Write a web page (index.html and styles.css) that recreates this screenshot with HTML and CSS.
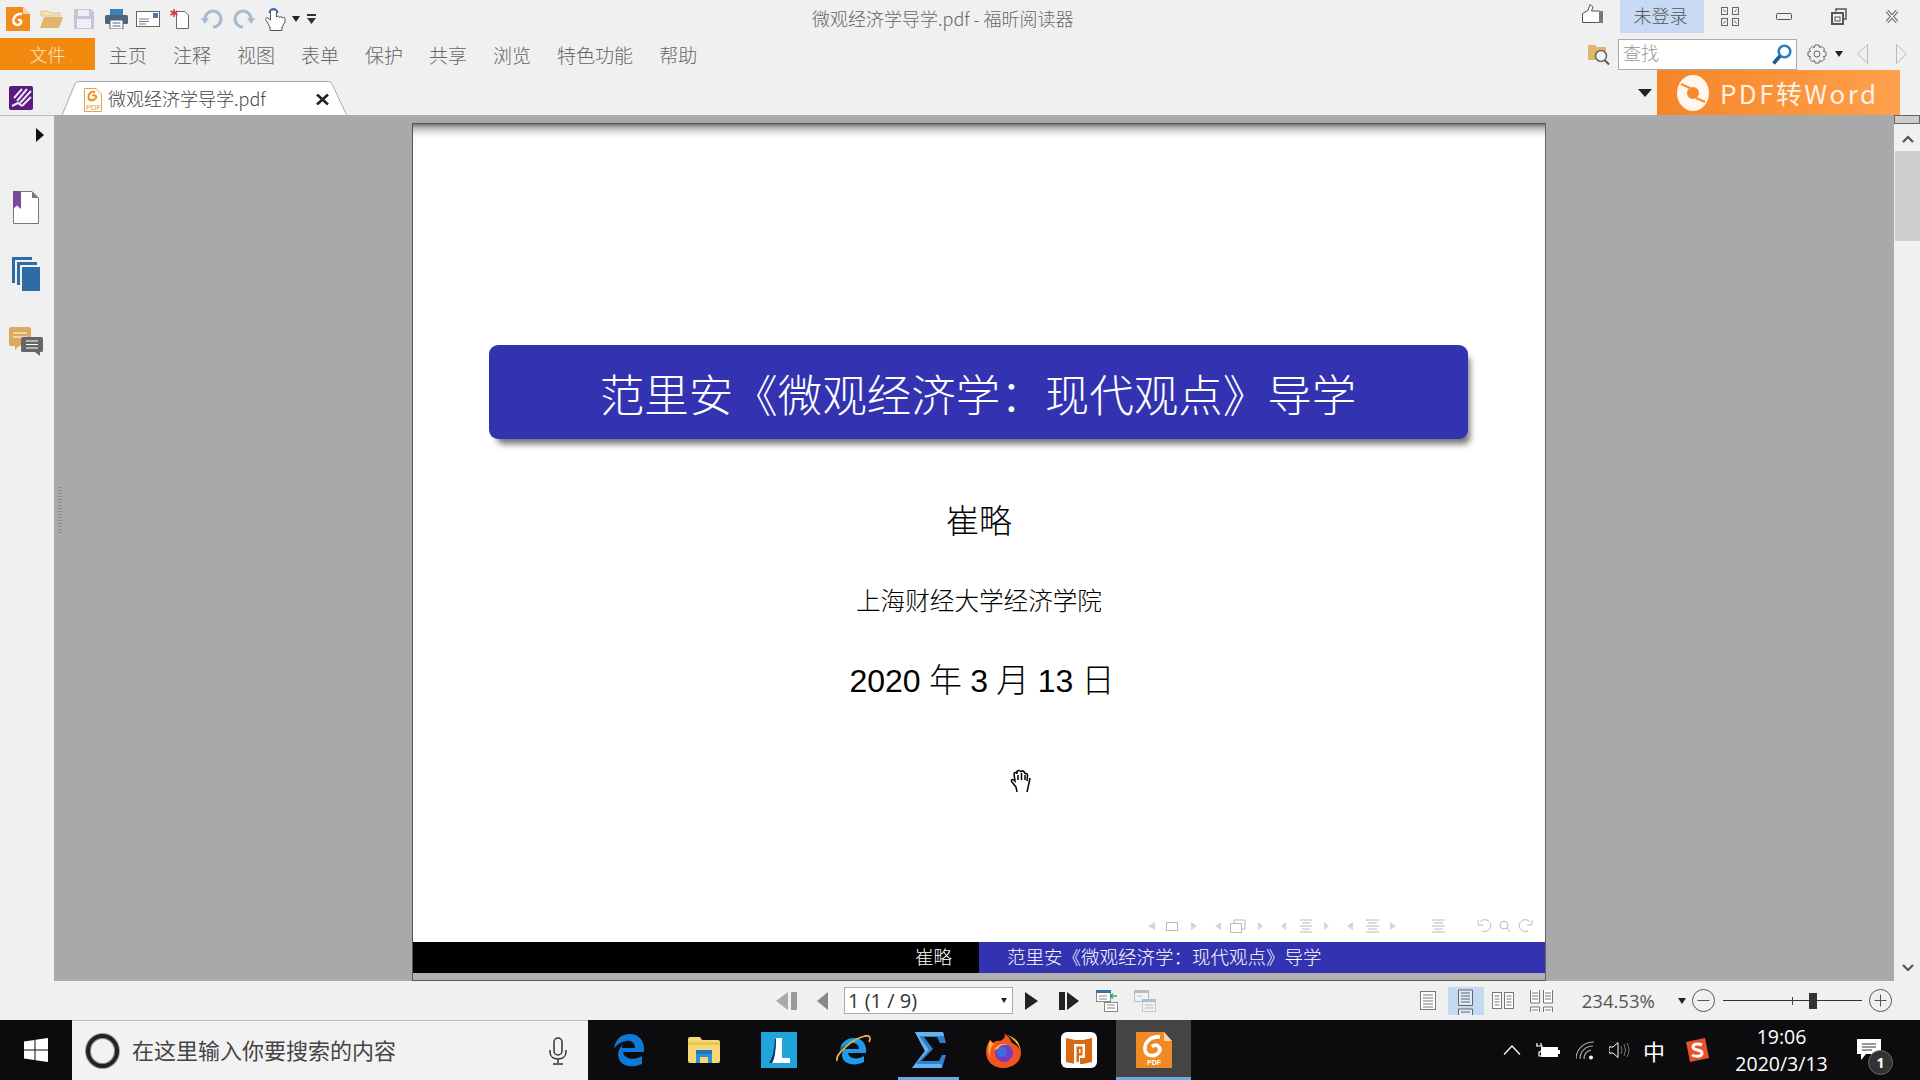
FILE: index.html
```html
<!DOCTYPE html>
<html lang="zh">
<head>
<meta charset="utf-8">
<title>微观经济学导学.pdf - 福昕阅读器</title>
<link rel="stylesheet" href="styles.css">
</head>
<body>
<div class="app">
  <header class="titlebar">
    <div class="qat">
      <svg width="24" height="24" viewBox="0 0 24 24"><path d="M0 0H17L24 7V24H0Z" fill="#f28a1c"/><path d="M17 0L24 7H17Z" fill="#fbd3a4"/><path d="M16 7C11 6 7 10 7.500 14.500C8 18.500 13 19 15 16C16 14 14 12 12 13.500" fill="none" stroke="#fff" stroke-width="2.400"/></svg>
      <svg width="23" height="18" viewBox="0 0 23 18"><path d="M1 1H8L10 3H20V6H1Z" fill="#f6e2b8" stroke="#e0c48c"/><path d="M4 7H23L19 18H0Z" fill="#e2b56c"/></svg>
      <svg width="20" height="20" viewBox="0 0 20 20"><path d="M0 0H17L20 3V20H0Z" fill="#c9c3d8"/><rect x="4" y="1" width="11" height="6" fill="#f1eff6"/><rect x="3" y="10" width="14" height="9" fill="#f1eff6"/></svg>
      <svg width="23" height="20" viewBox="0 0 23 20"><rect x="5" y="0" width="13" height="7" fill="#3f7fb4"/><rect x="0" y="6" width="23" height="9" rx="1.500" fill="#4f6478"/><rect x="5" y="11" width="13" height="9" fill="#fff" stroke="#4f6478"/><path d="M7.500 14H15.500M7.500 17H15.500" stroke="#4f6478"/></svg>
      <svg width="24" height="16" viewBox="0 0 24 16"><rect x=".5" y=".5" width="23" height="15" fill="#fff" stroke="#666"/><rect x="17" y="2" width="5" height="5" fill="#4f78a8"/><path d="M3 8H13M3 10.500H13M3 13H10" stroke="#777"/></svg>
      <svg width="19" height="20" viewBox="0 0 19 20"><path d="M6.500 2.500H15L18.500 6V19.500H6.500Z" fill="#fff" stroke="#666"/><path d="M4 0V8M.5 2L7.500 6M.5 6L7.500 2" stroke="#c8403a" stroke-width="1.500"/></svg>
      <svg width="23" height="20" viewBox="0 0 23 20"><path d="M12 18A8 8 0 1 0 4 10" fill="none" stroke="#a9bccd" stroke-width="3.200"/><path d="M0 9H8L4 15Z" fill="#a9bccd"/></svg>
      <svg width="23" height="20" viewBox="0 0 23 20"><path d="M11 18A8 8 0 1 1 19 10" fill="none" stroke="#a9bccd" stroke-width="3.200"/><path d="M15 9H23L19 15Z" fill="#a9bccd"/></svg>
      <svg width="21" height="24" viewBox="0 0 21 24"><path d="M5.500 4V13L3 11C1 10 0 12 1.500 14L5 20V23.500H17V20L20 15V11.500C20 10 18 10 17.500 11C17.500 9.500 15 9.500 14.500 10.500C14.500 9 12 9 11.500 10V4C11 2.500 6 2.500 5.500 4Z" fill="#fff" stroke="#555"/><path d="M4.500 6A4 4 0 1 1 12.500 6" fill="none" stroke="#3f6fb8" stroke-width="1.800"/></svg>
      <span class="tri tri-sm"></span>
      <svg width="9" height="11" viewBox="0 0 9 11"><path d="M0 0H9V2H0ZM0 4H9L4.500 10Z" fill="#333"/></svg>
    </div>
    <div class="doc-title">微观经济学导学.pdf - 福昕阅读器</div>
    <div class="winctl">
      <svg class="thumb" width="21" height="19" viewBox="0 0 21 19"><path d="M.5 9.500L6 6.500L8 .5L11 3L9.500 7H17.500V18.500H.5Z" fill="#fff" stroke="#555"/><rect x="17" y="7" width="4" height="12" fill="#777"/></svg>
      <span class="login"><span class="lift">未登录</span></span>
      <svg width="18" height="19" viewBox="0 0 18 19"><g fill="none" stroke="#666"><rect x=".5" y=".5" width="6" height="7"/><rect x="11.500" y=".5" width="6" height="7"/><rect x=".5" y="11.500" width="6" height="7"/><rect x="11.500" y="11.500" width="6" height="7"/><path d="M2.500 2.500L4.500 5M15.500 2.500L13.500 5M2.500 16.500L4.500 14M15.500 16.500L13.500 14"/></g></svg>
      <svg width="16" height="7" viewBox="0 0 16 7"><rect x=".5" y=".5" width="15" height="6" rx="1" fill="none" stroke="#555"/></svg>
      <svg width="16" height="17" viewBox="0 0 16 17"><path d="M5 3.500V1H15V11H12" fill="none" stroke="#555" stroke-width="1.500"/><rect x="1" y="5" width="11" height="11" fill="none" stroke="#555" stroke-width="2"/><rect x="4" y="9" width="5" height="4" fill="none" stroke="#555"/></svg>
      <svg width="16" height="13" viewBox="0 0 16 13"><path d="M3 1L13 12M13 1L3 12" stroke="#666" stroke-width="3.400"/><path d="M3 1L13 12M13 1L3 12" stroke="#f0f0f0" stroke-width="1.400"/></svg>
    </div>
  </header>

  <nav class="menubar">
    <div class="file-tab">文件</div>
    <ul class="menu">
      <li>主页</li><li>注释</li><li>视图</li><li>表单</li><li>保护</li><li>共享</li><li>浏览</li><li>特色功能</li><li>帮助</li>
    </ul>
    <div class="findbar">
      <svg width="22" height="22" viewBox="0 0 22 22"><path d="M0 2H7L9 4H18V17H0Z" fill="#e2b56c"/><circle cx="13" cy="13" r="5.500" fill="#f4f4f4" stroke="#666" stroke-width="1.500"/><path d="M17 17.500L21 21.500" stroke="#555" stroke-width="2"/></svg>
      <label class="search"><span class="lift">查找</span>
        <svg width="20" height="21" viewBox="0 0 20 21"><circle cx="12.500" cy="7.500" r="5.800" fill="#fff" stroke="#2c7fc0" stroke-width="2.600"/><path d="M8 12L1.500 19.500" stroke="#1d5f94" stroke-width="3.600"/></svg>
      </label>
      <svg width="20" height="20" viewBox="0 0 20 20"><path d="M8 1H12L12.500 3.500L15 2.500L17.500 5L16.500 7.500L19 8V12L16.500 12.500L17.500 15L15 17.500L12.500 16.500L12 19H8L7.500 16.500L5 17.500L2.500 15L3.500 12.500L1 12V8L3.500 7.500L2.500 5L5 2.500L7.500 3.500Z" fill="none" stroke="#666"/><circle cx="10" cy="10" r="3" fill="none" stroke="#666"/></svg>
      <span class="tri tri-sm"></span>
      <svg width="11" height="20" viewBox="0 0 11 20"><path d="M10.500 .5L.5 10L10.500 19.500Z" fill="none" stroke="#bbb"/></svg>
      <svg width="11" height="20" viewBox="0 0 11 20"><path d="M.5 .5L10.500 10L.5 19.500Z" fill="none" stroke="#bbb"/></svg>
    </div>
  </nav>

  <div class="tabbar">
    <svg class="app-mark" width="24" height="24" viewBox="0 0 24 24"><rect width="24" height="24" rx="2" fill="#5b1a80"/><path d="M5 12L13 3M8 15L18 3M11 17L22 5M13 20L22 11M3 20L9 17L13 20" fill="none" stroke="#efe6f4" stroke-width="2"/></svg>
    <div class="tab">
      <svg class="tab-shape" width="289" height="39" viewBox="0 0 289 39"><path d="M0 39L15 3Q16 .5 19 .5H268Q271 .5 272 3L289 39" fill="#fff" stroke="#aaa"/></svg>
      <svg class="tab-pdf" width="18" height="24" viewBox="0 0 18 24"><path d="M.5 .5H12L17.500 6V23.500H.5Z" fill="#fff" stroke="#e8a04a"/><path d="M11 4C6 3 4 7 4.500 10C5 13 10 13 12 10C13 8 10 6 8.500 8" fill="none" stroke="#ef8f1f" stroke-width="2"/><text x="2" y="21.500" class="pdf-mini">PDF</text></svg>
      <span class="tab-name">微观经济学导学.pdf</span>
      <svg class="tab-close" width="13" height="11" viewBox="0 0 13 11"><path d="M1 .5L12 10.500M12 .5L1 10.500" stroke="#222" stroke-width="2.600"/></svg>
    </div>
    <span class="tri tri-md"></span>
    <div class="promo">
      <svg width="32" height="36" viewBox="0 0 32 36"><ellipse cx="16" cy="18" rx="16" ry="18" fill="#fff7ee"/><circle cx="16" cy="18" r="6" fill="#f58a2b"/><path d="M4 9L13 13M28 27L19 23" stroke="#f58a2b" stroke-width="2"/></svg>
      <span>PDF转Word</span>
    </div>
  </div>

  <main class="workspace">
    <aside class="sidebar">
      <span class="side-toggle"></span>
      <svg class="side-book" width="26" height="33" viewBox="0 0 26 33"><path d="M.5 .5H19L25.500 7V32.500H.5Z" fill="#fff" stroke="#777"/><path d="M19 .5L25.500 7H19Z" fill="#777"/><path d="M0 0H8V18L4 14.500L0 18Z" fill="#7a4a9a"/></svg>
      <svg class="side-pages" width="28" height="34" viewBox="0 0 28 34"><path d="M0 0H20V3H3V26H0Z" fill="#2e6ca8"/><path d="M5 5H25V8H8V28H5Z" fill="#2e6ca8"/><rect x="10" y="10" width="18" height="24" fill="#2e6ca8"/></svg>
      <svg class="side-notes" width="34" height="29" viewBox="0 0 34 29"><path d="M2 0H20Q22 0 22 2V17Q22 19 20 19H10L6 23V19H2Q0 19 0 17V2Q0 0 2 0Z" fill="#dcaa5e"/><path d="M4 6H18M4 10H18" stroke="#fff"/><path d="M14 10H32Q34 10 34 12V24Q34 25 32 25H31V29L26 25H14Q12 25 12 24V12Q12 10 14 10Z" fill="#666"/><path d="M17 14H29M17 17.500H29M17 21H29" stroke="#fff"/></svg>
    </aside>
    <div class="canvas">
      <span class="grip"></span>
      <article class="page">
        <h1 class="beamer-title">范里安《微观经济学：现代观点》导学</h1>
        <p class="author">崔略</p>
        <p class="school">上海财经大学经济学院</p>
        <p class="date"><span class="num">2020</span> 年 <span class="num">3</span> 月 <span class="num">13</span> 日</p>
        <svg class="beamer-nav" width="390" height="20" viewBox="1145 916 390 20">
          <g fill="#d4d4dc"><path d="M1155 922V930L1148 926ZM1191 922V930L1197 926ZM1221 922V930L1215 926ZM1258 922V930L1263 926ZM1286 922V930L1281 926ZM1324 922V930L1329 926ZM1353 922V930L1347 926ZM1390 922V930L1396 926Z"/></g>
          <g fill="none" stroke="#b8b8c4"><rect x="1166.500" y="922.500" width="11" height="8"/><rect x="1230.500" y="923.500" width="11" height="9"/><path d="M1234 923V920H1245V929H1242"/><path d="M1300 920H1312M1302 923H1310M1300 926H1312M1302 929H1310M1300 932H1312M1366 920H1379M1368 923H1377M1366 926H1379M1368 929H1377M1366 932H1379M1432 920H1445M1434 923H1443M1432 926H1445M1434 929H1443M1432 932H1445"/><path d="M1480 922A6 6 0 1 1 1482 931M1478 920V925H1483"/><circle cx="1504" cy="925" r="4"/><path d="M1507 928L1510 932"/><path d="M1530 922A6 6 0 1 0 1528 931M1532 920V925H1527"/></g>
        </svg>
        <footer class="beamer-foot"><span class="foot-author">崔略</span><span class="foot-title">范里安《微观经济学：现代观点》导学</span></footer>
        <svg class="cursor" width="24" height="24" viewBox="0 0 24 24"><path d="M3 13L7 18L8 23M18 23L20 14L21 9M3 13C1 10 4 10 6 12L5 5C5 3 8 3 8 5M8 5L8 2.500C9 1 11 1 12 3M12 3C13 1 15.500 2 15.500 4M15.500 5C17 3.500 19 5 18.500 7L18 12" fill="#fff" stroke="#000" stroke-width="1.500"/><path d="M9 6V11M12.500 4V11M16 6V11" stroke="#000" stroke-width="1.500"/></svg>
      </article>
    </div>
    <div class="scrollbar">
      <span class="split-box"></span>
      <svg class="scroll-up" width="12" height="8" viewBox="0 0 12 8"><path d="M1 7L6 2L11 7" fill="none" stroke="#555" stroke-width="2.200"/></svg>
      <span class="scroll-thumb"></span>
      <svg class="scroll-down" width="12" height="8" viewBox="0 0 12 8"><path d="M1 1L6 6L11 1" fill="none" stroke="#555" stroke-width="2.200"/></svg>
    </div>
  </main>

  <div class="statusbar">
    <div class="pager">
      <svg width="21" height="18" viewBox="0 0 21 18"><path d="M12 0V18L0 9Z" fill="#aaa"/><path d="M15 0H21V18H15Z" fill="#999"/></svg>
      <svg width="15" height="18" viewBox="0 0 15 18"><path d="M13 0V18L2 9Z" fill="#888"/></svg>
      <div class="page-input"><span>1 (1 / 9)</span><i class="tri tri-xs"></i></div>
      <svg width="13" height="18" viewBox="0 0 13 18"><path d="M0 0V18L13 9Z" fill="#222"/></svg>
      <svg width="20" height="18" viewBox="0 0 20 18"><path d="M0 0H6V18H0ZM8 0V18L20 9Z" fill="#222"/></svg>
      <svg width="22" height="22" viewBox="0 0 22 22"><rect x=".5" y=".5" width="14" height="11" fill="#fff" stroke="#888"/><rect width="15" height="3" fill="#3d6ea8"/><path d="M3 6H11M3 9H11" stroke="#888"/><rect x="8.500" y="12.500" width="13" height="9" fill="#fff" stroke="#888"/><path d="M11 15H19M11 18H19" stroke="#888"/><path d="M21 6H15M17 3.500L14.500 6L17 8.500" fill="none" stroke="#3aa56b" stroke-width="1.300"/></svg>
      <svg width="22" height="22" viewBox="0 0 22 22"><rect x=".5" y=".5" width="14" height="11" fill="#f2f2f2" stroke="#bbb"/><rect width="15" height="3" fill="#bbb"/><rect x="8.500" y="9.500" width="13" height="12" fill="#f2f2f2" stroke="#bcc8d8"/><rect x="8" y="9" width="14" height="3" fill="#a9bfd8"/><path d="M3 6H8M11 15H19M11 18H19" stroke="#bbb"/></svg>
    </div>
    <div class="viewtools">
      <span class="view"><svg width="16" height="19" viewBox="0 0 16 19"><rect x=".5" y=".5" width="15" height="18" fill="#fff" stroke="#777"/><path d="M3 4H13M3 7H13M3 10H13M3 13H13M3 16H13" stroke="#777"/></svg></span>
      <span class="view view-on"><svg width="15" height="28" viewBox="0 0 15 28"><path d="M.5 18.500V3H14.500V18.500ZM.5 28V22H14.500V28" fill="#dfeaf8" stroke="#666"/><path d="M3 6H12M3 9H12M3 12H12M3 15H12M3 25H12" stroke="#666"/></svg></span>
      <span class="view"><svg width="22" height="17" viewBox="0 0 22 17"><g fill="#fff" stroke="#777"><rect x=".5" y=".5" width="9" height="16"/><rect x="12.500" y=".5" width="9" height="16"/></g><path d="M2.500 4H7.500M2.500 7H7.500M2.500 10H7.500M2.500 13H7.500M14.500 4H19.500M14.500 7H19.500M14.500 10H19.500M14.500 13H19.500" stroke="#777"/></svg></span>
      <span class="view"><svg width="23" height="22" viewBox="0 0 23 22"><path d="M.5 0V13H9.500V0M13.500 0V13H22.500V0M.5 22V17H9.500V22M13.500 22V17H22.500V22" fill="#fff" stroke="#777"/><path d="M2 3H8M2 6H8M2 9H8M15 3H21M15 6H21M15 9H21M2 20H8M15 20H21" stroke="#777"/></svg></span>
      <span class="zoom-value">234.53%</span>
      <i class="tri tri-sm"></i>
      <svg width="23" height="23" viewBox="0 0 23 23"><circle cx="11.500" cy="11.500" r="11" fill="none" stroke="#555"/><path d="M5.500 11.500H17.500" stroke="#555"/></svg>
      <div class="slider"><span class="tick"></span><span class="knob"></span></div>
      <svg width="23" height="23" viewBox="0 0 23 23"><circle cx="11.500" cy="11.500" r="11" fill="none" stroke="#555"/><path d="M5.500 11.500H17.500M11.500 5.500V17.500" stroke="#555"/></svg>
    </div>
  </div>

  <footer class="taskbar">
    <div class="start"><svg width="24" height="24" viewBox="0 0 24 24"><path d="M0 3.500L10.500 2V11.500H0ZM11.500 1.800L24 0V11.500H11.500ZM0 12.500H10.500V22L0 20.500ZM11.500 12.500H24V24L11.500 22.200Z" fill="#fff"/></svg></div>
    <div class="taskbar-search">
      <span class="cortana"></span>
      <span class="search-hint">在这里输入你要搜索的内容</span>
      <svg class="mic" width="18" height="28" viewBox="0 0 18 28"><rect x="5" y="1" width="8" height="17" rx="4" fill="none" stroke="#333" stroke-width="1.500"/><path d="M1 13V15C1 20 5 22 9 22C13 22 17 20 17 15V13M9 22V26M4 27H14" fill="none" stroke="#333" stroke-width="1.500"/></svg>
    </div>
    <div class="apps">
      <span class="app-slot"><svg width="32" height="33" viewBox="0 0 32 33"><path d="M1 15C2 5 9 0 17 0C26 0 32 7 31 18H10C11 25 21 27 29 22V30C18 35 6 32 5 21C5 17 7 13 10 10C9 12 9 13 9 14H22C22 8 17 6 13 7C8 8 3 11 1 15Z" fill="#0c7ad6"/></svg></span>
      <span class="app-slot"><svg width="32" height="26" viewBox="0 0 32 26"><path d="M0 2Q0 0 2 0H12L14 3H30Q32 3 32 5V24Q32 26 30 26H2Q0 26 0 24Z" fill="#f8d775"/><path d="M0 5H32V8H0Z" fill="#eec458"/><path d="M8 16H24V26H20V20H12V26H8Z" fill="#2f8fd8"/><rect x="8" y="13" width="16" height="4" fill="#1e76bd"/></svg></span>
      <span class="app-slot"><svg width="36" height="36" viewBox="0 0 36 36"><rect width="36" height="36" fill="#1fa5d8"/><path d="M15 6H21V26H29V31H11Q14 25 15 6Z" fill="#fff"/><path d="M14 7Q13 25 8 31H11Q15 25 15 7Z" fill="#10305e"/></svg></span>
      <span class="app-slot"><svg width="35" height="31" viewBox="0 0 35 31"><path d="M4 15C5 7 11 3 18 3C26 3 31 9 30 18H12C13 24 22 25 28 21V27C18 32 6 29 6 20C6 17 7 15 9 13C9 14 10 14 11 14H23C23 9 19 8 16 8C11 9 7 11 4 15Z" fill="#1f9be8"/><path d="M1 26C-1 20 14 5 29 1C34 0 35 3 33 7" fill="none" stroke="#e3b04a" stroke-width="1.800"/></svg></span>
      <span class="app-slot app-open"><svg width="34" height="36" viewBox="0 0 34 36"><path d="M3 0H31L34 11H28L25 5H12L21 17L9 29H27L30 23H34L30 36H0L13 19Z" fill="#2d7fd0"/><path d="M3 0H31L32 4H7L17 18L4 32H29L30 36H0L13 19Z" fill="#66b4ec"/></svg></span>
      <span class="app-slot"><svg width="35" height="35" viewBox="0 0 35 35"><path d="M18 0C24 5 24 6 26 10C31 12 35 16 35 21C34 30 26 35 17 35C7 35 0 28 0 19C0 14 2 10 4 7C5 8 6 10 6 11C8 8 12 7 14 8C19 6 20 3 18 0Z" fill="#f2531f"/><path d="M18 0C25 4 33 10 35 20C35 16 33 9 29 6C27 4 21 2 18 0Z" fill="#f9b731"/><path d="M4 7C2 13 1 19 5 25C3 18 5 14 8 11Z" fill="#fbb03b"/><circle cx="18" cy="20" r="9" fill="#6d3fc4"/><circle cx="16" cy="19" r="5" fill="#3d6be0"/><path d="M8 17C11 11 18 10 23 12C17 11 13 13 12 16Z" fill="#ffb43a"/></svg></span>
      <span class="app-slot"><svg width="36" height="36" viewBox="0 0 36 36"><rect width="36" height="36" rx="6" fill="#fff"/><path d="M5 6L14 8H22L31 6V30L22 32H14L5 30Z" fill="#d96a15"/><path d="M13 12H24V26H19V33H13Z" fill="#fff"/><path d="M15.500 14.500H21.500V23.500H18V30H15.500Z" fill="#d96a15"/><rect x="18" y="17" width="1.500" height="4" fill="#fff"/></svg></span>
      <span class="app-slot app-active"><svg width="36" height="36" viewBox="0 0 36 36"><path d="M0 0H28L36 9V36H0Z" fill="#f08a24"/><path d="M28 0L36 9H28Z" fill="#fbd3a4"/><path d="M24 5C14 4 8 11 9 18C10 24 19 26 23 20C26 15 20 11 16 15" fill="none" stroke="#fff" stroke-width="3.600"/><text x="11" y="33" class="pdf-task">PDF</text></svg></span>
    </div>
    <div class="tray">
      <svg width="18" height="10" viewBox="0 0 18 10"><path d="M1 9.500L9 1L17 9.500" fill="none" stroke="#fff" stroke-width="1.200"/></svg>
      <svg width="24" height="15" viewBox="0 0 24 15"><path d="M1 0V3M5 0V3M0 3H6V6C6 8 4 9 3 9V13H7" fill="none" stroke="#fff" stroke-width="1.200"/><rect x="5" y="4" width="17" height="10" fill="#fff"/><rect x="22" y="7" width="2" height="4" fill="#fff"/></svg>
      <svg width="19" height="19" viewBox="0 0 19 19"><path d="M0 18C0 9 7 1 18 1M4 18C4 11 9 5 17 5M8 18C8 13 11 10 15 9" fill="none" stroke="#aaa" stroke-width="1.200"/><circle cx="15" cy="16.500" r="2" fill="#fff"/></svg>
      <svg width="22" height="16" viewBox="0 0 22 16"><path d="M0 5H4L9 .5V15.500L4 11H0Z" fill="none" stroke="#fff"/><path d="M12 4Q14 8 12 12M15 2Q18 8 15 14M18 1Q22 8 18 15" fill="none" stroke="#777"/></svg>
      <span class="ime">中</span>
      <svg width="23" height="24" viewBox="0 0 23 24"><path d="M0 4L19 0L23 20L4 24Z" fill="#e8522a"/><path d="M16 7C12 5 7 6 7 9C7 13 16 11 16 15C16 19 10 19 6 17" fill="none" stroke="#fff" stroke-width="3"/></svg>
      <div class="clock"><span>19:06</span><span>2020/3/13</span></div>
      <div class="notify">
        <svg width="24" height="22" viewBox="0 0 24 22"><path d="M0 0H24V15H9L4 21V15H0Z" fill="#fff"/><path d="M5 5H19M5 8H19M5 11H15" stroke="#333"/></svg>
        <span class="badge">1</span>
      </div>
    </div>
  </footer>
</div>
</body>
</html>
```
FILE: styles.css
```css
* { box-sizing: border-box; margin: 0; padding: 0; }
html, body { width: 1920px; height: 1080px; overflow: hidden; }
body { font-family: "Noto Sans CJK SC", "Liberation Sans", sans-serif; background: #f0f0f0; color: #666; }
svg { display: block; flex: none; }
ul { list-style: none; }
.app { width: 1920px; height: 1080px; display: flex; flex-direction: column; }
.lift { display: block; margin-top: -3px; font-weight: 300; }

.tri { display: block; width: 0; height: 0; border-style: solid; border-color: #222 transparent transparent; }
.tri-sm { border-width: 6px 4px 0; }
.tri-md { border-width: 8px 7px 0; }
.tri-xs { border-width: 5px 3.500px 0; }

.titlebar { height: 38px; display: grid; grid-template-columns: 812px 266px 1fr; align-items: center; }
.qat { display: grid; grid-template-columns: 34px 34px 31px 31px 34px 31px 31px 33px 27px 15px 9px; align-items: center; padding-left: 6px; }
.doc-title { font-size: 18px; font-weight: 300; color: #666; white-space: nowrap; margin-top: -2px; }
.winctl { display: grid; grid-template-columns: 38px 101px 55px 55px 53px 36px; align-items: center; padding-left: 504px; height: 33px; align-self: start; }
.thumb { margin-top: -6px; }
.login { width: 84px; height: 33px; padding-right: 3px; background: #c8daf3; font-size: 18px; color: #555; display: flex; align-items: center; justify-content: center; }

.menubar { height: 32px; display: flex; align-items: center; }
.file-tab { width: 95px; height: 32px; background: #f28a10; color: #f8e3c8; font-size: 18px; font-weight: 300; display: flex; align-items: center; justify-content: center; }
.menu { display: flex; gap: 26px; margin-left: 14px; font-size: 19px; font-weight: 300; color: #666; }
.findbar { margin-left: auto; width: 319px; display: grid; grid-template-columns: 30px 189px 28px 22px 39px 11px; align-items: center; margin-right: 13px; }
.search { width: 179px; height: 31px; background: #fff; border: 1px solid #aaa; display: flex; align-items: center; justify-content: space-between; padding: 0 4px; font-size: 18px; color: #999; }
.search .lift { margin-top: -5px; }

.tabbar { height: 45px; display: flex; align-items: center; position: relative; }
.app-mark { margin: 11px 0 0 9px; }
.tab { position: relative; width: 289px; height: 38px; margin: 7px 0 -7px 27px; display: flex; align-items: center; }
.tab-shape { position: absolute; left: 0; top: 0; }
.tab-pdf { position: relative; margin-left: 24px; }
.pdf-mini { font: 7.500px "Liberation Sans", sans-serif; fill: #e8902c; }
.pdf-task { font: bold 7px "Liberation Sans", sans-serif; fill: #fff; }
.tab-name { position: relative; margin: -4px 0 0 6px; font-size: 18px; font-weight: 300; color: #444; white-space: nowrap; }
.tab-close { position: relative; margin-left: 50px; }
.tri-md { margin-left: auto; margin-right: 5px; }
.promo { width: 243px; height: 45px; margin-right: 20px; background: linear-gradient(90deg, #f58527, #ffa04c); display: flex; align-items: center; gap: 11px; padding-left: 20px; color: #fff1e4; font-size: 26px; letter-spacing: 2.400px; white-space: nowrap; }

.workspace { height: 866px; display: flex; }
.sidebar { width: 54px; background: #f0f0f0; border-top: 1px solid #bbb; padding-right: 2px; display: flex; flex-direction: column; align-items: center; }
.side-toggle { width: 0; height: 0; margin: 12px 0 0 28px; border-style: solid; border-width: 7px 0 7px 8px; border-color: transparent transparent transparent #111; }
.side-book { margin-top: 49px; }
.side-pages { margin-top: 33px; }
.side-notes { margin-top: 36px; }
.canvas { flex: 1; background: #a9a9a9; padding: 8px 0 0 358px; position: relative; }
.grip { position: absolute; left: 4px; top: 372px; width: 4px; height: 46px; background: repeating-linear-gradient(#8c8c8c 0 1px, transparent 1px 3px); }
.page { width: 1134px; height: 858px; background: linear-gradient(#777, #bbb 4px, #eee 10px, #fff 14px); border-left: 1px solid #555; border-top: 1px solid #555; border-right: 1px solid #666; display: flex; flex-direction: column; align-items: center; position: relative; color: #000; padding-top: 221px; font-weight: 300; }
.beamer-title { width: 979px; height: 94px; flex: none; margin-right: 2px; background: #3333b2; border-radius: 9px; box-shadow: 5px 8px 6px -3px rgba(70,70,70,.75); color: #fff; font-size: 44.500px; font-weight: 300; display: flex; align-items: center; justify-content: center; white-space: nowrap; }
.author, .school, .date { height: 40px; line-height: 40px; white-space: nowrap; }
.author { margin-top: 60px; font-size: 33px; }
.school { margin-top: 40px; font-size: 24.600px; }
.date { margin: 39px 0 0 6px; font-size: 33px; word-spacing: 1px; }
.num { font-family: "Liberation Sans", sans-serif; font-size: 32px; }
.beamer-nav { margin: auto 10px 6px auto; }
.beamer-foot { width: 100%; height: 31px; flex: none; display: grid; grid-template-columns: 566px 1fr; color: #fff; margin-bottom: 8px; box-shadow: 0 7px 0 #b0b0b0, 0 8px 0 #555; font-size: 18.500px; line-height: 29px; }
.foot-author { background: #000; text-align: right; padding-right: 27px; }
.foot-title { background: #3333b2; padding-left: 28px; white-space: nowrap; }
.cursor { position: absolute; left: 596px; top: 645px; }

.scrollbar { width: 26px; background: #f0f0f0; display: flex; flex-direction: column; align-items: center; }
.split-box { width: 26px; height: 9px; background: #ccc; border: 1px solid #666; }
.scroll-up { margin: 11px 0 0 1px; }
.scroll-thumb { width: 25px; height: 90px; margin: 8px 0 0 1px; background: #cfcfcf; }
.scroll-down { margin: auto 0 9px 1px; }

.statusbar { height: 39px; display: flex; align-items: center; }
.pager { display: grid; grid-template-columns: 39px 29px 181px 34px 37px 38px 22px; align-items: center; margin-left: 776px; }
.page-input { width: 169px; height: 27px; background: #fff; border: 1px solid #aaa; display: flex; align-items: center; justify-content: space-between; padding: 0 5px 0 3px; font-family: "Open Sans", sans-serif; font-size: 20px; color: #333; }
.viewtools { display: flex; align-items: center; margin-left: 254px; }
.view { width: 36px; height: 28px; display: flex; align-items: center; justify-content: center; margin-right: 1.700px; overflow: hidden; }
.view-on { background: #c4d9f2; }
.zoom-value { font-family: "Open Sans", sans-serif; font-size: 18.500px; color: #555; margin: 0 23px 0 21px; }
.viewtools .tri { margin-right: 6px; }
.slider { width: 139px; height: 16px; margin: 0 7px 0 8px; position: relative; background: linear-gradient(#333,#333) center/100% 1px no-repeat; }
.tick { position: absolute; left: 69px; top: 4px; width: 1px; height: 8px; background: #444; }
.knob { position: absolute; left: 86px; top: 0; width: 8px; height: 16px; background: #333; }

.taskbar { height: 60px; background: #0c0c0e; display: flex; color: #fff; }
.start { width: 72px; display: flex; align-items: center; justify-content: center; }
.taskbar-search { width: 516px; background: #f2f2f2; border-top: 1px solid #bbb; display: flex; align-items: center; padding-left: 14px; }
.cortana { width: 33px; height: 34px; border-radius: 50%; border: 4px solid #222; box-shadow: 0 0 0 1px #999, inset 0 0 0 1px #888; background: #f2f2f2; }
.search-hint { margin: -4px 0 0 13px; font-size: 22px; color: #444; white-space: nowrap; }
.mic { margin-left: auto; margin-right: 21px; }
.apps { display: flex; margin-left: 3px; }
.app-slot { width: 75px; display: flex; align-items: center; justify-content: center; position: relative; height: 60px; }
.app-open::after, .app-active::after { content: ""; position: absolute; left: 7px; right: 7px; bottom: 0; height: 3px; background: #6ea8de; }
.app-active { background: #444; }
.app-active::after { left: 0; right: 0; }
.tray { display: flex; align-items: center; margin-left: 312px; }
.ime { font-size: 22px; margin: 0 21px 0 12px; }
.tray svg:nth-of-type(1) { margin-right: 15px; }
.tray svg:nth-of-type(2) { margin-right: 16px; }
.tray svg:nth-of-type(3) { margin-right: 14px; }
.clock { width: 91px; margin-left: 27px; display: flex; flex-direction: column; align-items: center; font-family: "Open Sans", sans-serif; font-size: 19.500px; line-height: 27px; white-space: nowrap; }
.notify { position: relative; margin-left: 30px; }
.badge { position: absolute; left: 11px; top: 11px; width: 25px; height: 25px; border-radius: 50%; background: #333; border: 1px solid #666; display: flex; align-items: center; justify-content: center; font-family: "Open Sans", sans-serif; font-weight: 700; font-size: 14px; }
```
